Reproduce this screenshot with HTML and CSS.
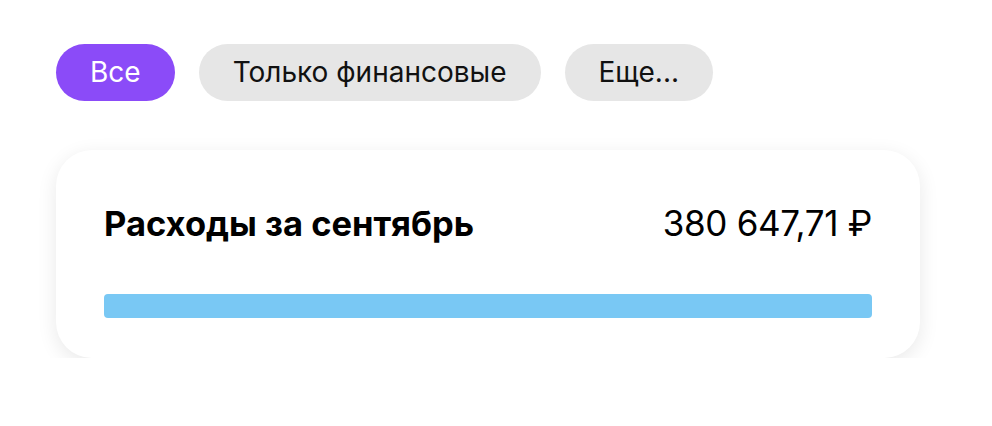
FILE: index.html
```html
<!DOCTYPE html>
<html lang="ru">
<head>
    <meta charset="UTF-8">
    <title>Расходы</title>
    <link rel="stylesheet" href="styles.css">
</head>
<body>
<div class="page">
    <ul class="filters">
        <li class="chip active">Все</li>
        <li class="chip">Только финансовые</li>
        <li class="chip">Еще...</li>
    </ul>
    <div class="card">
        <div class="card-head">
            <span class="card-title">Расходы за сентябрь</span>
            <span class="card-sum">380 647,71 ₽</span>
        </div>
        <div class="bar"></div>
    </div>
</div>
</body>
</html>
```
FILE: styles.css
```css
html,body,ul{
    padding:0;
    margin:0;
}
body{
    background:#fff;
    color:#000;
    font-family:Inter, "Noto Sans", sans-serif;
}
.page{
    padding:44px 72px 0 56px;
}
.filters{
    display:flex;
    gap:24px;
    list-style-type:none;
}
.chip{
    height:57px;
    line-height:57px;
    padding:0 34px;
    border-radius:29px;
    background:#e6e6e6;
    font-size:28px;
    color:#111;
}
.chip.active{
    background:#8b4bf8;
    color:#fff;
}
.card{
    margin-top:49px;
    width:864px;
    box-sizing:border-box;
    padding:53px 48px 40px;
    border-radius:36px;
    background:#fff;
    box-shadow:0 5px 20px rgba(0,0,0,0.09);
}
.card-head{
    display:flex;
    justify-content:space-between;
    align-items:baseline;
    height:40px;
    line-height:40px;
}
.card-title{
    font-size:34.5px;
    font-weight:700;
}
.card-sum{
    font-size:35px;
    letter-spacing:-0.3px;
}
.bar{
    margin-top:51px;
    height:24px;
    border-radius:4px;
    background:#79c8f4;
}
```
